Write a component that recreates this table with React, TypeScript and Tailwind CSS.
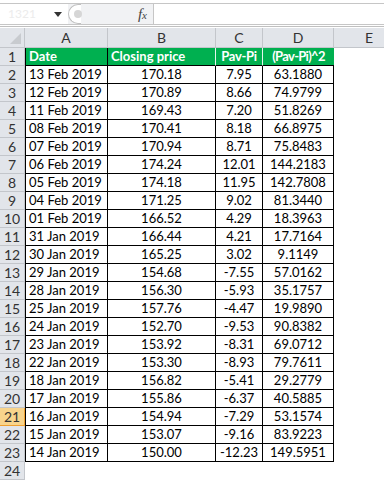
import React from "react";

const rows: [string, string, string, string][] = [
  ["13 Feb 2019", "170.18", "7.95", "63.1880"],
  ["12 Feb 2019", "170.89", "8.66", "74.9799"],
  ["11 Feb 2019", "169.43", "7.20", "51.8269"],
  ["08 Feb 2019", "170.41", "8.18", "66.8975"],
  ["07 Feb 2019", "170.94", "8.71", "75.8483"],
  ["06 Feb 2019", "174.24", "12.01", "144.2183"],
  ["05 Feb 2019", "174.18", "11.95", "142.7808"],
  ["04 Feb 2019", "171.25", "9.02", "81.3440"],
  ["01 Feb 2019", "166.52", "4.29", "18.3963"],
  ["31 Jan 2019", "166.44", "4.21", "17.7164"],
  ["30 Jan 2019", "165.25", "3.02", "9.1149"],
  ["29 Jan 2019", "154.68", "-7.55", "57.0162"],
  ["28 Jan 2019", "156.30", "-5.93", "35.1757"],
  ["25 Jan 2019", "157.76", "-4.47", "19.9890"],
  ["24 Jan 2019", "152.70", "-9.53", "90.8382"],
  ["23 Jan 2019", "153.92", "-8.31", "69.0712"],
  ["22 Jan 2019", "153.30", "-8.93", "79.7611"],
  ["18 Jan 2019", "156.82", "-5.41", "29.2779"],
  ["17 Jan 2019", "155.86", "-6.37", "40.5885"],
  ["16 Jan 2019", "154.94", "-7.29", "53.1574"],
  ["15 Jan 2019", "153.07", "-9.16", "83.9223"],
  ["14 Jan 2019", "150.00", "-12.23", "149.5951"],
];

function RowHead({ n, active }: { n: number; active?: boolean }) {
  return (
    <div
      className={
        active
          ? "w-[25px] shrink-0 flex items-center justify-center text-[14px] font-normal tracking-normal bg-[#f8d48c] border-r border-b border-[#f0a030] text-[#333]"
          : "w-[25px] shrink-0 flex items-center justify-center text-[14px] font-normal tracking-normal bg-[#e2e5ea] border-r border-b border-[#c3c6cb] text-[#333]"
      }
    >
      {n}
    </div>
  );
}

export default function App() {
  return (
    <div
      className="w-[384px] h-[484px] overflow-hidden bg-white text-[13px] leading-none text-black whitespace-nowrap"
      style={{ fontFamily: "Lato, 'Open Sans', sans-serif" }}
    >
      {/* formula bar */}
      <div className="h-[28px] bg-white pt-[3px]">
        <div className="flex h-[22px] border-t border-b border-[#c6c6c6]">
          <div className="w-[68px] flex items-center justify-between pl-2 pr-[6px] bg-white">
            <span className="text-[12px] text-[#ececec]">1321</span>
            <svg width="8" height="5" viewBox="0 0 8 5">
              <path d="M0 0 L8 0 L4 5 Z" fill="#333" />
            </svg>
          </div>
          <div className="w-[86px] flex items-center bg-[#f1f2f4] border-r border-[#c6c6c6]">
            <div className="w-[13px] h-[20px] rounded-l-full border border-r-0 border-[#c0c0c0] bg-white flex items-center justify-end">
              <div className="w-[8px] h-[8px] rounded-full bg-[#d6d6d6] mr-[-1px]" />
            </div>
            <span
              className="ml-auto mr-[6px] italic text-[15px] text-[#444]"
              style={{ fontFamily: "'Liberation Serif', serif" }}
            >
              f<span className="text-[11px]">x</span>
            </span>
          </div>
          <div className="flex-1 bg-white" />
        </div>
        <div className="h-[1px] mt-[1px] bg-[#c0c0c0]" />
      </div>

      {/* column header */}
      <div className="flex h-[20px] bg-[#e2e5ea] text-[#333] text-[14px]">
        <div className="w-[25px] shrink-0 border-r border-b border-[#c3c6cb] relative">
          <div className="absolute right-[3px] bottom-[3px] w-0 h-0 border-l-[11px] border-l-transparent border-b-[11px] border-b-[#c8cbcf]" />
        </div>
        <div className="w-[83px] shrink-0 flex items-center justify-center border-r border-b border-[#c3c6cb]">A</div>
        <div className="w-[108px] shrink-0 flex items-center justify-center border-r border-b border-[#c3c6cb]">B</div>
        <div className="w-[47px] shrink-0 flex items-center justify-center border-r border-b border-[#c3c6cb]">C</div>
        <div className="w-[71px] shrink-0 flex items-center justify-center border-r border-b border-[#c3c6cb]">D</div>
        <div className="w-[70px] shrink-0 flex items-center justify-center border-b border-[#c3c6cb]">E</div>
      </div>

      {/* row 1 */}
      <div className="flex h-[18px] font-bold text-white">
        <RowHead n={1} />
        <div className="w-[83px] shrink-0 flex items-center pl-[3px] bg-[#00b050] border-l border-r border-b border-black">
          Date
        </div>
        <div className="w-[108px] shrink-0 flex items-center pl-[3px] bg-[#00b050] border-r border-b border-r-[#e6f5ec] border-b-black">
          Closing price
        </div>
        <div className="w-[47px] shrink-0 flex items-center justify-center bg-[#00b050] border-r border-b border-r-[#e6f5ec] border-b-black tracking-[-0.3px]">
          Pav-Pi
        </div>
        <div className="w-[71px] shrink-0 flex items-center justify-center bg-[#00b050] border-b border-black tracking-[-0.7px]">
          (Pav-Pi)^2
        </div>
      </div>

      {rows.map((r, i) => (
        <div key={i} className="flex h-[18px]">
          <RowHead n={i + 2} active={i + 2 === 21} />
          <div className="w-[83px] shrink-0 flex items-center pl-[3px] border-l border-r border-b border-black">
            {r[0]}
          </div>
          <div className="w-[108px] shrink-0 flex items-center justify-center border-r border-b border-black">
            {r[1]}
          </div>
          <div className="w-[47px] shrink-0 flex items-center justify-center border-r border-b border-black">
            {r[2]}
          </div>
          <div className="w-[71px] shrink-0 flex items-center justify-center border-r border-b border-black">
            {r[3]}
          </div>
        </div>
      ))}

      <div className="flex h-[18px]">
        <RowHead n={24} />
      </div>
    </div>
  );
}
